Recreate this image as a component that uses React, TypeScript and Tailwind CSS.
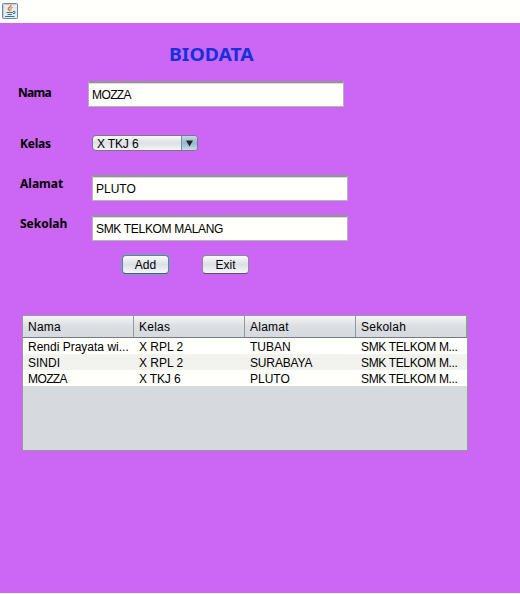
import type { ReactNode } from "react";

const columns = ["Nama", "Kelas", "Alamat", "Sekolah"];
const rows = [
  ["Rendi Prayata wi...", "X RPL 2", "TUBAN", "SMK TELKOM M..."],
  ["SINDI", "X RPL 2", "SURABAYA", "SMK TELKOM M..."],
  ["MOZZA", "X TKJ 6", "PLUTO", "SMK TELKOM M..."],
];

const tracking: Record<string, string> = {
  MOZZA: "tracking-[-0.6px]",
  "SMK TELKOM MALANG": "tracking-[-0.32px]",
  "SMK TELKOM M...": "tracking-[-0.35px]",
  SURABAYA: "tracking-[-0.15px]",
  "X TKJ 6": "tracking-[-0.15px]",
};

function JavaIcon() {
  return (
    <svg width="16" height="16" viewBox="0 0 16 16" fill="none">
      <rect x="0.5" y="0.5" width="15" height="15" rx="0.8" fill="#e3edf4" stroke="#6c8aa0" />
      <path d="M1.5 14.5V1.5H14.5" stroke="#bdd0dc" />
      <path d="M9 2C9.500 3.800 6 4.300 6.300 6C6.500 7 7.800 7.200 7.500 8.300" stroke="#ee7420" strokeWidth="1.500" />
      <path d="M10.700 4.200C8.700 5 8.300 6.300 9.200 7.800" stroke="#f09040" strokeWidth="1.200" />
      <path d="M4.500 9.500H11M5.500 11.500H10" stroke="#3e7299" />
      <path d="M3 13.500H12.500" stroke="#3e7299" />
      <path d="M11 8.500H12.800V10.500H11" stroke="#3e7299" />
    </svg>
  );
}

function Label({ children, className }: { children: ReactNode; className: string }) {
  return (
    <label className={`block shrink-0 font-['Noto_Sans',sans-serif] text-[12px] leading-4 font-bold text-black ${className}`}>
      {children}
    </label>
  );
}

function Field({ value }: { value: string }) {
  return (
    <div className="flex h-[26px] w-[256px] shrink-0 items-center border border-t-2 border-[#b5b5b5] border-t-[#949494] bg-[#fffffb] pl-[3px] shadow-[inset_0_1px_0_#d9dcdd]">
      <span className={`text-[12px] leading-4 whitespace-nowrap ${tracking[value] ?? ""}`}>{value}</span>
    </div>
  );
}

function Button({ children, focused = false }: { children: ReactNode; focused?: boolean }) {
  return (
    <button
      className={`flex h-[19px] w-[47px] items-center justify-center rounded-[4px] border bg-linear-to-b from-[#fafafb] via-[#dce0e4] to-[#f5f7f8] text-[12px] leading-4 ${
        focused ? "border-[#6b7d90] border-b-[#4f5a66] shadow-[0_0_0_1px_#759ed5]" : "border-[#8e8996] border-b-[#5b5362]"
      }`}
    >
      {children}
    </button>
  );
}

export default function App() {
  return (
    <div className="flex h-[594px] w-[520px] flex-col overflow-hidden bg-[#fffffb] font-['Liberation_Sans',Arial,sans-serif] text-black">
      <header className="flex h-[23px] shrink-0 pt-[3px] pl-[2px]">
        <JavaIcon />
      </header>
      <main className="h-[570px] shrink-0 bg-[#cc66f5]">
        <h1 className="h-[58px] pt-[19px] pl-[169px] font-['Noto_Sans',sans-serif] text-[18px] leading-[24px] font-bold text-[#1132dc]">
          <span className="inline-block origin-left scale-x-[1.075]">BIODATA</span>
        </h1>
        <div className="flex h-[54px] pl-[18px]">
          <Label className="w-[70px] pt-[4px] tracking-[-0.75px]">Nama</Label>
          <Field value="MOZZA" />
        </div>
        <div className="flex h-[40px] pl-[20px]">
          <Label className="w-[72px] pt-[1px] tracking-[-0.2px]">Kelas</Label>
          <div className="flex h-[16px] w-[106px] overflow-hidden rounded-[4px] border border-[#7d7585] bg-linear-to-b from-[#f8f9fa] via-[#dce0e4] to-[#f4f6f8]">
            <span className="flex-1 pl-[4px] text-[12px] leading-[16px] tracking-[-0.15px]">X TKJ 6</span>
            <span className="flex w-[16px] items-center justify-center border-l border-[#6991ad] bg-linear-to-b from-[#c4d8e5] via-[#98b7cb] to-[#c8dce7]">
              <svg width="7" height="7" viewBox="0 0 7 7">
                <path d="M0 0.500H7L3.500 6.500Z" fill="#20262b" />
              </svg>
            </span>
          </div>
        </div>
        <div className="flex h-[40px] pl-[20px]">
          <Label className="w-[72px] pt-[1px]">Alamat</Label>
          <Field value="PLUTO" />
        </div>
        <div className="flex h-[40px] pl-[20px]">
          <Label className="w-[72px] pt-[1px]">Sekolah</Label>
          <Field value="SMK TELKOM MALANG" />
        </div>
        <div className="flex h-[60px] gap-[33px] pl-[122px]">
          <Button focused>Add</Button>
          <Button>Exit</Button>
        </div>
        <section className="ml-[22px] h-[136px] w-[446px] border border-[#929a9e] bg-[#d6d9dd] text-[12px]">
          <div className="flex h-[22px] border-b border-[#747b83] bg-linear-to-b from-[#f4f5f7] via-[#dbdee2] to-[#d6d9de]">
            {columns.map((column) => (
              <div key={column} className="w-[111px] border-r border-[#9298a0] pl-[5px] text-[12px] leading-[22px] tracking-[0.25px]">
                {column}
              </div>
            ))}
          </div>
          {rows.map((row) => (
            <div key={row[0]} className="flex h-[16px] bg-[#fffffb] even:bg-[#fffffb] odd:bg-[#f2f2ee]">
              {row.map((cell, index) => (
                <div key={index} className={`w-[111px] pl-[5px] leading-[18px] whitespace-nowrap ${tracking[cell] ?? ""}`}>{cell}</div>
              ))}
            </div>
          ))}
        </section>
      </main>
    </div>
  );
}
